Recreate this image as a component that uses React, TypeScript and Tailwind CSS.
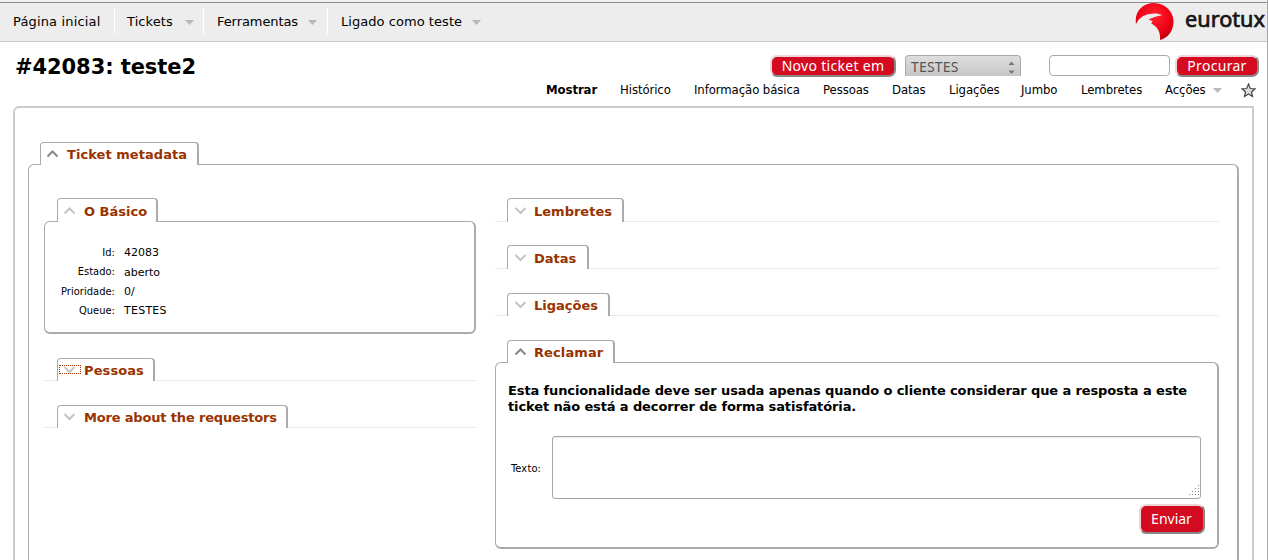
import React from "react";

const Caret = ({ className = "" }: { className?: string }) => (
  <svg className={"shrink-0 " + className} width="9" height="5" viewBox="0 0 9 5">
    <path d="M0 0H9L4.5 5Z" fill="#b8b8b8" />
  </svg>
);

const Chevron = ({ up, dark }: { up?: boolean; dark?: boolean }) => (
  <svg className="shrink-0" width="12" height="8" viewBox="0 0 12 8" fill="none" stroke={dark ? "#888" : "#c4c4c4"} strokeWidth="2">
    <path d={up ? "M1.5 6.5L6.5 1.5L11.5 6.5" : "M1.5 1L6.5 6L11.5 1"} />
  </svg>
);

type TabProps = { title: string; box: string; spacing?: string; up?: boolean; dark?: boolean; focus?: boolean; shift?: boolean };

const Tab = ({ title, box, spacing = "", up, dark, focus, shift }: TabProps) => (
  <div className={"relative z-10 flex items-center rounded-t-[4px] border border-b-0 border-r-2 border-[#aaa] bg-white " + box}>
    <span
      className={
        "flex h-[9px] shrink-0 items-center justify-center " +
        (shift ? "w-[22px] pl-[2px] " : "w-[22px] ") +
        (focus ? "ml-px mr-[-1px] -mt-px pr-[2px] outline-1 -outline-offset-1 outline-dotted outline-[#993300]" : "")
      }
    >
      <Chevron up={up} dark={dark} />
    </span>
    <span className={"ml-[4px] pt-[2px] whitespace-nowrap text-[13px] leading-[16px] font-bold text-[#993300] " + spacing}>{title}</span>
  </div>
);

const Collapsed = (props: TabProps & { outer: string }) => (
  <div className={"border-b border-[#eaeaea] pl-[12px] " + props.outer}>
    <div className="-mb-px">
      <Tab {...props} />
    </div>
  </div>
);

const facts: [string, string, string, string][] = [
  ["Id:", "42083", "h-[20px]", ""],
  ["Estado:", "aberto", "h-[19px]", "pt-[2px]"],
  ["Prioridade:", "0/", "h-[20px]", ""],
  ["Queue:", "TESTES", "h-[19px]", "tracking-[0.25px]"],
];

const pageTabs: [string, string][] = [
  ["Histórico", "w-[74px]"],
  ["Informação básica", "w-[129px]"],
  ["Pessoas", "w-[69px]"],
  ["Datas", "w-[57px]"],
  ["Ligações", "w-[72px]"],
  ["Jumbo", "w-[60px]"],
  ["Lembretes", "w-[84px]"],
];

const redButton =
  "shrink-0 rounded-[7px] border-2 border-t-[#eed5d8] border-l-[#eed5d8] border-r-[#888] border-b-[#888] bg-[#d40b20] text-center font-['Noto_Sans',sans-serif] text-[14px] whitespace-nowrap text-white";

export default function App() {
  return (
    <div className="flex h-[560px] w-[1268px] flex-col overflow-hidden border-r border-[#aaa] bg-white font-['DejaVu_Sans',sans-serif] text-black">
      <div className="h-[2px] shrink-0 bg-[#f0f0f0]" />
      <header className="flex h-[40px] shrink-0 border-t border-b border-t-[#8c8c8c] border-b-[#c8c8c8] bg-[#ededed] text-[13px]">
        <nav className="mt-[5px] flex h-[26px] items-center leading-[28px] whitespace-nowrap">
          <div className="h-[26px] w-[115px] border-r border-white pl-[13px] tracking-[0.16px]">Página inicial</div>
          <div className="flex h-[26px] w-[89px] items-center border-r border-white pl-[12px]">
            <span className="w-[58px] pt-[2px] tracking-[0.1px]">Tickets</span>
            <Caret className="mt-[3px]" />
          </div>
          <div className="flex h-[26px] w-[124px] items-center border-r border-white pl-[13px]">
            <span className="w-[91px] pt-[2px] tracking-[-0.08px]">Ferramentas</span>
            <Caret className="mt-[3px]" />
          </div>
          <div className="flex h-[26px] items-center pl-[13px]">
            <span className="w-[131px] pt-[2px] tracking-[0.05px]">Ligado como teste</span>
            <Caret className="mt-[3px]" />
          </div>
        </nav>
        <svg className="ml-auto" width="132" height="38" viewBox="1136 3 132 38">
          <defs>
            <radialGradient id="ball" cx="0.5" cy="0.35" r="0.7">
              <stop offset="0" stopColor="#ff2430" />
              <stop offset="0.6" stopColor="#f00016" />
              <stop offset="1" stopColor="#b5000c" />
            </radialGradient>
          </defs>
          <path
            d="M1137 24C1135 11 1144 3 1155 3C1166 3 1174.500 11.500 1174.500 21.500C1174.500 31 1169 38 1161 40C1161.500 33 1160 28 1151.500 23L1153.500 21L1149 19.500C1154 17 1157 16 1163.500 15C1159 13.500 1155 13 1151 14C1144 15 1140 18 1137 24Z"
            fill="url(#ball)"
          />
          <path d="M1146 15.500C1151 13.500 1156 13.500 1162 15C1156 16.500 1152 18 1149 20L1153.500 21.500L1152 23.500C1156 25.500 1159 29 1160 33L1150 26Z" fill="#ededed" />
          <text x="1186" y="27" textLength="80" lengthAdjust="spacingAndGlyphs" fontFamily="'Noto Sans', sans-serif" fontSize="21.500" fill="#151515" stroke="#151515" strokeWidth="0.7">eurotux</text>
        </svg>
      </header>

      <div className="flex h-[37px] shrink-0 items-start pl-[15px]">
        <h1 className="mt-[12px] w-[755px] text-[21px] leading-[26px] font-bold tracking-[-0.08px]">#42083: teste2</h1>
        <button className={redButton + " mt-[13px] h-[22px] w-[126px] leading-[18px] tracking-[0.3px]"}>Novo ticket em</button>
        <div className="mt-[13px] ml-[9px] flex h-[21px] w-[116px] shrink-0 items-center rounded-t-[4px] border border-b-0 border-[#aaa] bg-linear-to-b from-[#dedede] to-[#c6c6c6] pl-[5px] font-['Noto_Sans',sans-serif] text-[14px] text-[#555]">
          <span className="w-[97px] tracking-[0.2px]">TESTES</span>
          <svg className="mt-[3px]" width="7" height="13" viewBox="0 0 7 13" fill="#777">
            <path d="M0.5 4L3.500 0.500L6.500 4ZM0.500 9.500L3.500 13L6.500 9.500Z" />
          </svg>
        </div>
        <div className="mt-[13px] ml-[28px] h-[21px] w-[121px] shrink-0 rounded-[4px] border border-[#aaa] bg-white" />
        <button className={redButton + " mt-[13px] ml-[5px] h-[22px] w-[84px] leading-[18px] tracking-[0.3px]"}>Procurar</button>
      </div>

      <nav className="flex h-[27px] shrink-0 items-center pb-[5px] pl-[546px] font-['DejaVu_Sans_Condensed','DejaVu_Sans',sans-serif] text-[13px] leading-[22px] tracking-[-0.08px] whitespace-nowrap [font-stretch:condensed]">
        <span className="w-[74px] font-bold">Mostrar</span>
        {pageTabs.map(([label, width]) => (
          <span key={label} className={width}>{label}</span>
        ))}
        <span className="w-[48px]">Acções</span>
        <Caret />
        <svg className="mt-px ml-[19px]" width="15" height="15" viewBox="0 0 15 15" fill="#ddd" stroke="#444" strokeWidth="1.2">
          <path d="M7.500 1L9.300 5.500L14 5.800L10.500 9L11.500 13.500L7.500 11L3.500 13.500L4.500 9L1 5.800L5.700 5.500Z" />
        </svg>
      </nav>

      <main className="ml-[13px] h-[460px] w-[1241px] shrink-0 rounded-tl-[6px] border-2 border-b-0 border-[#ccc] pt-[34px] pl-[13px]">
        <div className="pl-[12px]">
          <Tab title="Ticket metadata" box="h-[23px] w-[159px]" spacing="tracking-[0.05px]" up dark />
        </div>
        <section className="-mt-px flex h-[410px] w-[1211px] items-start rounded-t-[6px] border border-r-2 border-b-0 border-[#aaa] pt-[33px] pl-[15px]">
          <div className="w-[432px]">
            <div className="pl-[13px]">
              <Tab title="O Básico" box="h-[24px] w-[101px]" up />
            </div>
            <div className="-mt-px h-[113px] w-[432px] rounded-[6px] border border-r-2 border-b-2 border-[#aaa] pt-[21px] text-[11px]">
              {facts.map(([label, value, height, tweak]) => (
                <div key={label} className={"flex items-center whitespace-nowrap " + height}>
                  <span className="w-[70px] text-right font-['DejaVu_Sans_Condensed','DejaVu_Sans',sans-serif] tracking-[0.04px] [font-stretch:condensed]">{label}</span>
                  <span className={"ml-[9px] " + tweak}>{value}</span>
                </div>
              ))}
            </div>
            <Collapsed title="Pessoas" box="h-[23px] w-[98px]" outer="mt-[24px] pl-[13px]" spacing="tracking-[0.1px]" focus />
            <Collapsed title="More about the requestors" box="h-[23px] w-[231px]" outer="mt-[24px] pl-[13px]" spacing="tracking-[-0.17px]" />
          </div>
          <div className="ml-[19px] w-[724px]">
            <Collapsed title="Lembretes" box="h-[24px] w-[117px]" outer="" shift />
            <Collapsed title="Datas" box="h-[24px] w-[82px]" outer="mt-[23px]" shift />
            <Collapsed title="Ligações" box="h-[23px] w-[103px]" outer="mt-[24px]" shift />
            <div className="mt-[24px] pl-[12px]">
              <Tab title="Reclamar" box="h-[23px] w-[108px]" spacing="tracking-[0.1px]" up dark shift />
            </div>
            <div className="-mt-px h-[187px] w-[724px] rounded-[6px] border border-r-2 border-b-2 border-[#aaa] pt-[20px] pl-[12px]">
              <p className="text-[13px] leading-[16px] font-bold tracking-[-0.12px] whitespace-nowrap">
                Esta funcionalidade deve ser usada apenas quando o cliente considerar que a resposta a este<br />
                ticket não está a decorrer de forma satisfatória.
              </p>
              <div className="mt-[21px] flex items-center">
                <label className="w-[44px] pt-[3px] pl-[3px] font-['DejaVu_Sans_Condensed','DejaVu_Sans',sans-serif] text-[11px] tracking-[0.15px] [font-stretch:condensed]">Texto:</label>
                <div className="flex h-[63px] w-[649px] items-end justify-end rounded-[3px] border border-[#aaa69d] shadow-[inset_0_1px_0_#eeece8]">
                  <svg className="mb-[1px]" width="12" height="12" viewBox="0 0 12 12" fill="#888">
                    <path d="M10 0h1v1h-1zM7 3h1v1h-1zM10 3h1v1h-1zM4 6h1v1h-1zM7 6h1v1h-1zM10 6h1v1h-1zM1 9h1v1h-1zM4 9h1v1h-1zM7 9h1v1h-1zM10 9h1v1h-1z" />
                  </svg>
                </div>
              </div>
              <button className={redButton + " mt-[5px] ml-[631px] block h-[30px] w-[66px] pr-px leading-[24px]"}>Enviar</button>
            </div>
          </div>
        </section>
      </main>
    </div>
  );
}
